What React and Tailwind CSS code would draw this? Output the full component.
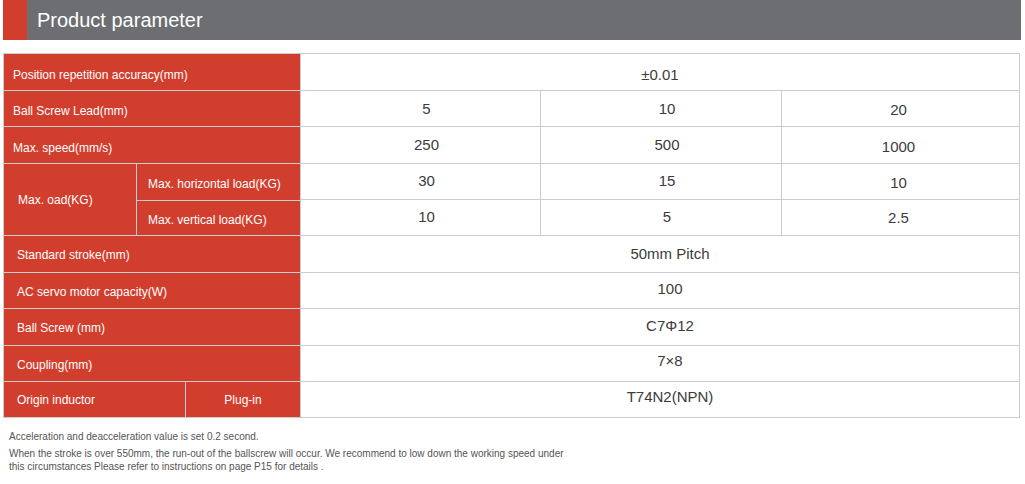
import React from "react";

const rows = [
  { label: "Position repetition accuracy(mm)", values: ["±0.01"], h: "h-[36px]" },
  { label: "Ball Screw Lead(mm)", values: ["5", "10", "20"], h: "h-[35px]" },
  { label: "Max. speed(mm/s)", values: ["250", "500", "1000"], h: "h-[36px]" },
];

const bottomRows = [
  { label: "Standard stroke(mm)", value: "50mm Pitch", h: "h-[36px]", vpad: "pt-[1px]" },
  { label: "AC servo motor capacity(W)", value: "100", h: "h-[35px]", vpad: "pb-[3px]" },
  { label: "Ball Screw (mm)", value: "C7Φ12", h: "h-[36px]", vpad: "pb-[2px]" },
  { label: "Coupling(mm)", value: "7×8", h: "h-[35px]", vpad: "pb-[4px]" },
];

const cellRed = "bg-[#d23e2d] text-white text-[12px] flex items-center";
const cellWhite = "bg-white text-[#3b3b3b] text-[15px] flex items-center justify-center";

const App = () => {
  return (
    <div className="w-[1025px] h-[484px] bg-white overflow-hidden" style={{ fontFamily: '"Liberation Sans", Arial, sans-serif' }}>
      {/* Header */}
      <div className="flex h-[40px] pl-[3px] pr-[4px]">
        <div className="w-[24px] bg-[#d23e2d]" />
        <div className="flex-1 bg-[#6d6e72] flex items-center pl-[10px]">
          <h1 className="text-white text-[20px] leading-none">Product parameter</h1>
        </div>
      </div>

      {/* Table */}
      <div className="mt-[13px] ml-[3px] w-[1017px] bg-[#cccccc] p-[1px] flex flex-col gap-[1px]">
        {rows.map((row) => (
          <div key={row.label} className={`flex gap-[1px] ${row.h}`}>
            <div className={`${cellRed} w-[296px] pl-[9px] pt-[5px]`}>{row.label}</div>
            {row.values.length === 1 ? (
              <div className={`${cellWhite} flex-1 pt-[6px]`}>{row.values[0]}</div>
            ) : (
              <>
                <div className={`${cellWhite} w-[239px] pl-[12px] pt-[1px]`}>{row.values[0]}</div>
                <div className={`${cellWhite} w-[240px] pl-[12px] pt-[1px]`}>{row.values[1]}</div>
                <div className={`${cellWhite} flex-1 pt-[4px] pr-[4px]`}>{row.values[2]}</div>
              </>
            )}
          </div>
        ))}

        {/* Max load block */}
        <div className="flex gap-[1px] h-[71px]">
          <div className={`${cellRed} w-[132px] pl-[14px] pt-[1px]`}>Max. oad(KG)</div>
          <div className="w-[163px] flex flex-col gap-[1px]">
            <div className={`${cellRed} flex-1 pl-[11px] pt-[5px]`}>Max. horizontal load(KG)</div>
            <div className={`${cellRed} flex-1 pl-[11px] pt-[4px]`}>Max. vertical load(KG)</div>
          </div>
          <div className="flex-1 flex flex-col gap-[1px]">
            <div className="flex gap-[1px] flex-1">
              <div className={`${cellWhite} w-[239px] pl-[12px]`}>30</div>
              <div className={`${cellWhite} w-[240px] pl-[12px]`}>15</div>
              <div className={`${cellWhite} flex-1 pt-[3px] pr-[4px]`}>10</div>
            </div>
            <div className="flex gap-[1px] flex-1">
              <div className={`${cellWhite} w-[239px] pl-[12px]`}>10</div>
              <div className={`${cellWhite} w-[240px] pl-[12px]`}>5</div>
              <div className={`${cellWhite} flex-1 pt-[2px] pr-[4px]`}>2.5</div>
            </div>
          </div>
        </div>

        {bottomRows.map((row) => (
          <div key={row.label} className={`flex gap-[1px] ${row.h}`}>
            <div className={`${cellRed} w-[296px] pl-[13px] pt-[2px]`}>{row.label}</div>
            <div className={`${cellWhite} flex-1 pl-[20px] ${row.vpad}`}>{row.value}</div>
          </div>
        ))}

        <div className="flex gap-[1px] h-[35px]">
          <div className={`${cellRed} w-[181px] pl-[13px] pt-[1px]`}>Origin inductor</div>
          <div className={`${cellRed} w-[114px] justify-center pt-[1px]`}>Plug-in</div>
          <div className={`${cellWhite} flex-1 pl-[20px] pb-[4px]`}>T74N2(NPN)</div>
        </div>
      </div>

      {/* Notes */}
      <div className="ml-[9px] mt-[12px] text-[10px] text-[#555555] leading-[13px]">
        <p>Acceleration and deacceleration value is set 0.2 second.</p>
        <p className="mt-[4px] w-[560px]">
          When the stroke is over 550mm, the run-out of the ballscrew will occur. We recommend to low down the working speed under
          this circumstances Please refer to instructions on page P15 for details .
        </p>
      </div>
    </div>
  );
};

export default App;
